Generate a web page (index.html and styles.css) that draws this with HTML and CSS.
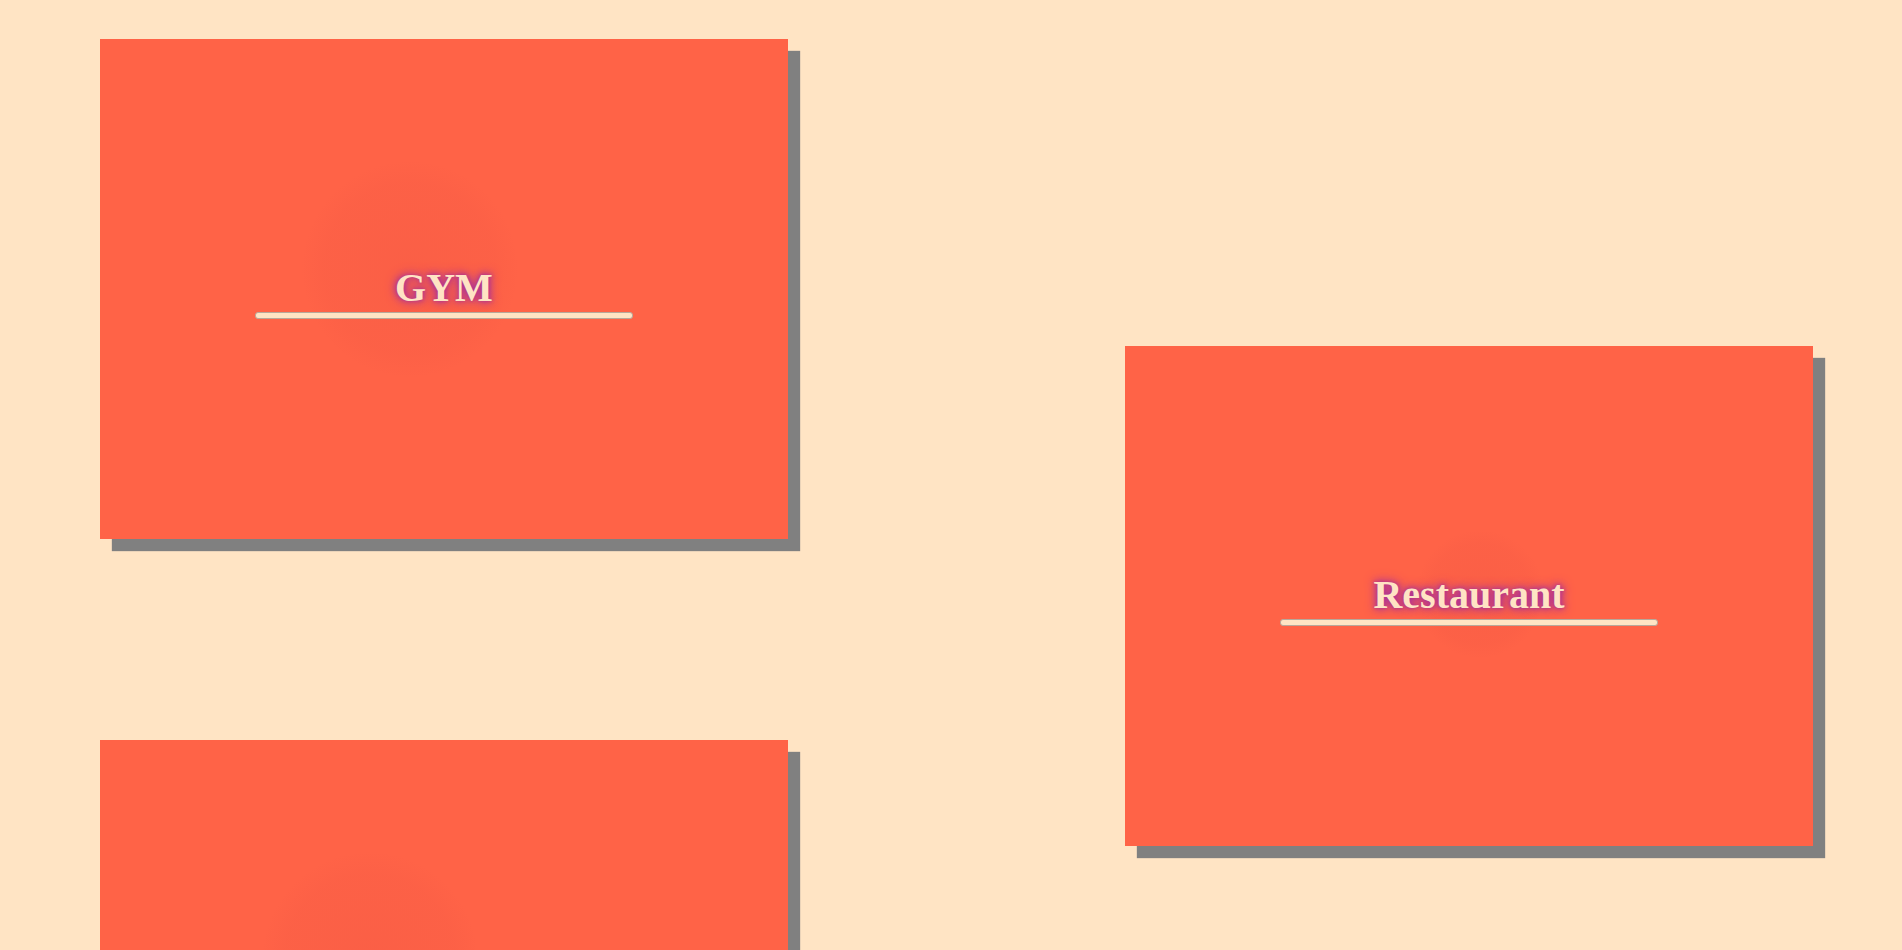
FILE: index.html
```html
<!DOCTYPE html>
<html lang="en">
<head>
  <meta charset="UTF-8">
  <meta name="viewport" content="width=device-width, initial-scale=1.0">
  <title>Places</title>
  <link rel="stylesheet" href="styles.css">
</head>
<body>
  <div class="board">
    <!-- Left column -->
    <div class="col">
      <div class="card blob-a">
        <h2 class="title">GYM</h2>
        <div class="bar"></div>
      </div>
      <div class="card blob-c">
        <h2 class="title">Library</h2>
        <div class="bar"></div>
      </div>
    </div>
    <!-- Right column -->
    <div class="col col-right">
      <div class="card blob-b">
        <h2 class="title">Restaurant</h2>
        <div class="bar"></div>
      </div>
      <div class="card blob-a">
        <h2 class="title">Cinema</h2>
        <div class="bar"></div>
      </div>
    </div>
  </div>
</body>
</html>
```

FILE: styles.css
```css
/* General Styles */
html::-webkit-scrollbar {
  width: 2px;
  height: 2px;
}

html::-webkit-scrollbar-track {
  background: #f1f1f1;
}

html::-webkit-scrollbar-thumb {
  background: #c8c8c8;
}

body {
  margin: 0;
  background: #ffe4c4;
  font-family: 'Liberation Serif', 'Times New Roman', serif;
}

.board {
  display: grid;
  grid-template-columns: 688px 688px;
  column-gap: 337px;
  padding: 39px 0 60px 100px;
}

.col {
  display: flex;
  flex-direction: column;
  gap: 201px;
}

.col-right {
  padding-top: 307px;
}

.card {
  position: relative;
  height: 500px;
  background: #ff6347;
  box-shadow: 12px 12px 1px #808080;
  display: flex;
  flex-direction: column;
  align-items: center;
  justify-content: center;
  gap: 1px;
  padding-top: 5px;
  box-sizing: border-box;
  overflow: hidden;
}

/* faint glowing blob behind the title */
.card::before {
  content: '';
  position: absolute;
  border-radius: 50%;
  background: radial-gradient(circle, rgba(210, 60, 60, 0.1) 0%, rgba(210, 60, 60, 0.06) 55%, rgba(210, 60, 60, 0) 70%);
}

.blob-a::before {
  left: 200px;
  top: 120px;
  width: 220px;
  height: 220px;
}

.blob-b::before {
  left: 290px;
  top: 183px;
  width: 130px;
  height: 130px;
}

.blob-c::before {
  left: 160px;
  top: 110px;
  width: 220px;
  height: 220px;
}

.title {
  position: relative;
  margin: 0;
  font-size: 40px;
  font-weight: bold;
  color: #ffe4c4;
  text-shadow: 0 0 12px #a8309c, 0 0 7px #a8309c, 0 0 3px rgba(168, 48, 156, 0.7);
}

.bar {
  position: relative;
  width: 376px;
  height: 5px;
  background: #ffe4c4;
  border: 1px solid #b8a89a;
  border-radius: 3px;
}
```
